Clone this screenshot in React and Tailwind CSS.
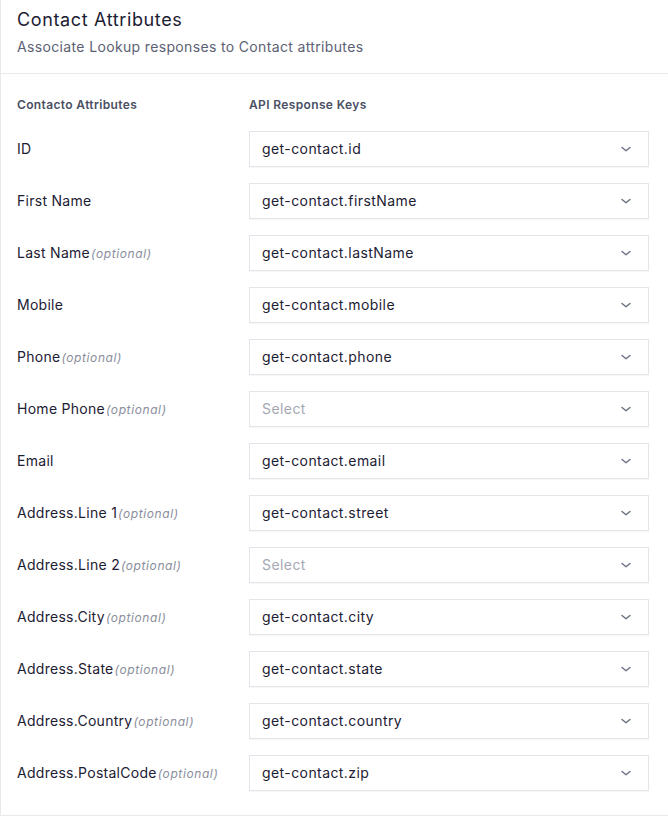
const rows = [
  { label: 'ID', value: 'get-contact.id' },
  { label: 'First Name', value: 'get-contact.firstName' },
  { label: 'Last Name', optional: true, value: 'get-contact.lastName' },
  { label: 'Mobile', value: 'get-contact.mobile' },
  { label: 'Phone', optional: true, value: 'get-contact.phone' },
  { label: 'Home Phone', optional: true, value: null },
  { label: 'Email', value: 'get-contact.email' },
  { label: 'Address.Line 1', optional: true, value: 'get-contact.street' },
  { label: 'Address.Line 2', optional: true, value: null },
  { label: 'Address.City', optional: true, value: 'get-contact.city' },
  { label: 'Address.State', optional: true, value: 'get-contact.state' },
  { label: 'Address.Country', optional: true, value: 'get-contact.country' },
  { label: 'Address.PostalCode', optional: true, value: 'get-contact.zip' },
]

const Chevron = () => (
  <svg width="12" height="12" viewBox="0 0 12 12" fill="none" className="text-[#6b6f82]">
    <path d="M2 4.5 6 7.8l4-3.3" stroke="currentColor" strokeWidth="1.4" strokeLinecap="round" strokeLinejoin="round" />
  </svg>
)

const SelectBox = ({ value }) => (
  <div className="h-9 w-[400px] flex items-center justify-between pl-3 pr-4 bg-white border border-[#e3e5ea] shadow-[0_1px_1px_rgba(0,0,0,0.03)]">
    {value ? (
      <span className="text-sm tracking-[0.03em] text-[#1c2033]">{value}</span>
    ) : (
      <span className="text-sm tracking-[0.03em] text-[#a4a8b4]">Select</span>
    )}
    <Chevron />
  </div>
)

export default function App() {
  return (
    <div className="min-h-screen bg-white" style={{ fontFamily: 'Inter, "Noto Sans", sans-serif' }}>
      <div className="w-[700px] border-l border-b border-[#e8e9ed] bg-white">
        <div className="px-4 pt-[6px] pb-4 border-b border-[#e8e9ed]">
          <h1 className="text-lg leading-7 tracking-[0.035em] text-[#1c2033]">Contact Attributes</h1>
          <p className="mt-[3px] text-sm leading-5 tracking-[0.025em] text-[#5c6174]">Associate Lookup responses to Contact attributes</p>
        </div>
        <div className="px-4 pt-[23px] pb-6">
          <div className="flex text-xs leading-4 font-semibold tracking-[0.03em] text-[#4a4f63]">
            <div className="w-[232px]">Contacto Attributes</div>
            <div>API Response Keys</div>
          </div>
          <div className="mt-[18px] flex flex-col gap-4">
            {rows.map((r) => (
              <div key={r.label} className="flex items-center">
                <div className="w-[232px] text-sm tracking-[0.02em] text-[#1c2033]">
                  {r.label}
                  {r.optional && <span className="ml-px text-xs italic tracking-[0.05em] text-[#8a8e9c]">(optional)</span>}
                </div>
                <SelectBox value={r.value} />
              </div>
            ))}
          </div>
        </div>
      </div>
    </div>
  )
}
